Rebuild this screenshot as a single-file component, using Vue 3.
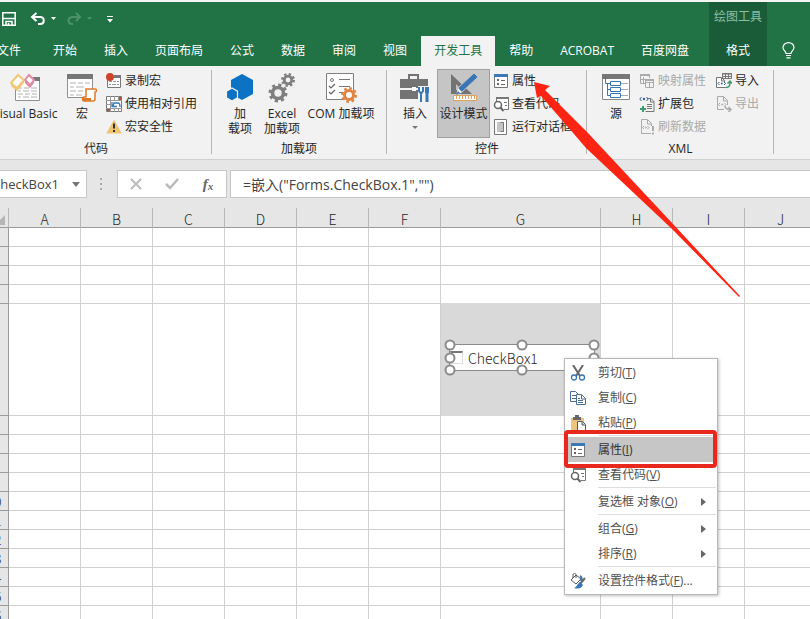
<script setup>
import { ref } from 'vue'

const tabs = ['文件', '开始', '插入', '页面布局', '公式', '数据', '审阅', '视图', '开发工具', '帮助', 'ACROBAT', '百度网盘']
const activeTab = ref('开发工具')
const nameBox = ref('CheckBox1')
const formula = ref('=嵌入("Forms.CheckBox.1","")')
const columns = ['A', 'B', 'C', 'D', 'E', 'F', 'G', 'H', 'I', 'J']
const rows = Array.from({ length: 17 }, (_, i) => i + 1)
const handles = ['nw', 'n', 'ne', 'w', 'e', 'sw', 's', 'se']
const menu = [
  { label: '剪切', key: 'T', icon: 'cut' },
  { label: '复制', key: 'C', icon: 'copy' },
  { label: '粘贴', key: 'P', icon: 'paste', sep: true },
  { label: '属性', key: 'I', icon: 'props', active: true },
  { label: '查看代码', key: 'V', icon: 'code', sep: true },
  { label: '复选框 对象', key: 'O', sub: true, sep: true },
  { label: '组合', key: 'G', sub: true },
  { label: '排序', key: 'R', sub: true, sep: true },
  { label: '设置控件格式', key: 'F', tail: '...', icon: 'format' }
]
</script>

<template>
  <div class="app">
    <!-- Shared icon symbols -->
    <svg class="defs" aria-hidden="true">
      <symbol id="i-props" viewBox="0 0 16 16">
        <path d="M1.500 2v12.500h13V2" fill="#fff" stroke="#777" />
        <path d="M1 1h14v3H1z" fill="#3b78b5" />
        <path d="M4 6h2v2H4zM4 10h2v2H4z" fill="#666" />
        <path d="M8 7.500h4M8 11.500h4" stroke="#666" />
      </symbol>
      <symbol id="i-code" viewBox="0 0 16 16">
        <path d="M3.500 5V1.500h12v12H11" fill="#fff" stroke="#777" />
        <path d="M3 1h13v2H3z" fill="#777" />
        <path d="M11 6.500h3M12 9.500h2" stroke="#777" />
        <circle cx="5" cy="9" r="3.500" fill="#fff" stroke="#666" stroke-width="1.500" />
        <path d="M7.500 11.500l3 3.500" stroke="#666" stroke-width="2" />
      </symbol>
    </svg>

    <header class="top">
      <div class="main-head">
        <div class="quick">
          <button aria-label="保存">
            <svg width="14" height="14" viewBox="0 0 14 14" fill="none" stroke="#fff" stroke-width="1.500"><path d="M.8.8h12.400v12.400H.8zM1 6.500h12M4 13V9.500h6V13M6.500 13v-2" /></svg>
          </button>
          <button class="undo" aria-label="撤消">
            <svg width="27" height="14" viewBox="0 0 27 14"><path d="M2 5h8c5 0 5 7 0 7H8M6.500 1L2 5l4.500 4" fill="none" stroke="#fff" stroke-width="2" /><path d="M21 5h5l-2.500 3z" fill="#fff" /></svg>
          </button>
          <button class="redo" aria-label="恢复" disabled>
            <svg width="27" height="14" viewBox="0 0 27 14"><path d="M14 5H7c-6 0-6 7 0 7M10 1l4 4-4 4" fill="none" stroke="#4c9269" stroke-width="2" /><path d="M21 5h5l-2.500 3z" fill="#4c9269" /></svg>
          </button>
          <button class="more" aria-label="自定义快速访问工具栏">
            <svg width="6" height="7" viewBox="0 0 6 7"><path d="M0 .5h6" stroke="#fff" /><path d="M0 3h6L3 6.500z" fill="#fff" /></svg>
          </button>
        </div>
        <nav class="tabs">
          <button v-for="t in tabs" :key="t" :class="{ on: t === activeTab }" @click="activeTab = t">{{ t }}</button>
        </nav>
      </div>
      <div class="context">
        <span>绘图工具</span>
        <button>格式</button>
      </div>
      <button class="bulb" aria-label="告诉我">
        <svg width="13" height="17" viewBox="0 0 13 17" fill="none" stroke="#fff" stroke-width="1.200"><path d="M4 11.500C4 9 1 8.500 1 5.500a5.500 4.900 0 0 1 11 0c0 3-3 3.500-3 6zM4 13.500h5M4.500 15.800h4" /></svg>
      </button>
    </header>

    <section class="ribbon">
      <div class="group first">
        <div class="body">
          <button class="big w66">
            <svg width="32" height="30" viewBox="0 0 32 30">
              <path d="M6 5h25v23H6z" fill="#fff" /><path d="M6.500 10v17.500h24V6" fill="none" stroke="#909090" /><path d="M24 4h7v4h-7z" fill="#777" />
              <path d="M9 15h4m2 0h5m2 0h6M9 18h3m2 0h6m2 0h6M9 21h5m2 0h5m2 0h5M9 24h3m2 0h6m2 0h6" stroke="#b0b0b0" />
              <path d="M9 2l6 5-7 8-6-5z" fill="#fff" stroke="#efc777" stroke-width="2" /><path d="M2 10l6 5 7-8v3l-7 8-6-5z" fill="#efc777" />
              <path d="M20 2l5 5-4 5-5-5z" fill="#fff" stroke="#e389a3" stroke-width="2" /><path d="M16 7l5 5 4-5v3l-4 5-5-5z" fill="#e389a3" />
            </svg>
            <span>Visual Basic</span>
          </button>
          <button class="big w48">
            <svg width="32" height="30" viewBox="0 0 32 30">
              <path d="M1.500 3v21.500h25V3" fill="#fff" stroke="#909090" /><path d="M1 1h26v5H1z" fill="#777" />
              <path d="M4 10h6m2 0h5m2 0h5M4 14h4m2 0h8M4 18h6m2 0h5M4 22h4m2 0h6" stroke="#b0b0b0" />
              <path d="M20 16h9c2 0 2 3 0 3v7c0 2-1 2-2 2H18c-2 0-2-4 0-4h2z" fill="#fff" stroke="#df7a2c" stroke-width="1.500" /><path d="M17 25h8v3h-8z" fill="#df7a2c" />
            </svg>
            <span>宏</span>
          </button>
          <div class="stack">
            <button><svg width="16" height="16" viewBox="0 0 16 16"><path d="M1.500 3v11.500h13V3" fill="#fff" stroke="#777" /><path d="M8 2h7v3H8z" fill="#777" /><path d="M3 8.500h3m1 0h3m1 0h2M3 11.500h2m1 0h4m1 0h2" stroke="#999" /><circle cx="4" cy="4" r="4" fill="#cf4427" /></svg>录制宏</button>
            <button><svg width="16" height="16" viewBox="0 0 16 16"><path d="M.5.5h15v15H.5z" fill="#fff" stroke="#777" /><path d="M4.500 0v16M8.500 0v5M12.500 0v5M0 4.500h16M0 8.500h5M0 12.500h16M8.500 12v4M12.500 12v4" stroke="#999" /><path d="M1 13h3v2H1zM13 1h2v3h-2z" fill="#b4513b" /><path d="M5 5h10v7H5z" fill="#fff" /><path d="M7 10l1-3h4c2 0 2 2 2 4M6 6v4.500h5" fill="none" stroke="#3876b4" stroke-width="1.300" /></svg>使用相对引用</button>
            <button><svg width="16" height="16" viewBox="0 0 16 16"><path d="M8 1.500L15 14H1z" fill="#efc46f" stroke="#efc46f" stroke-linejoin="round" /><path d="M8 4.500v5M8 11v2" stroke="#333" stroke-width="2" /></svg>宏安全性</button>
          </div>
        </div>
        <div class="caption">代码</div>
      </div>

      <div class="group addins">
        <div class="body">
          <button class="big w40">
            <svg width="28" height="30" viewBox="0 0 28 30"><path d="M16 1l11 6v14l-11 6-11-6V7z" fill="#0b72c4" /><path d="M6 15l5.500 3.200v6.600L6 28 .5 24.800v-6.600z" fill="#0b72c4" stroke="#f2f2f2" stroke-width="1.200" /></svg>
            <span>加<br>载项</span>
          </button>
          <button class="big w44">
            <svg width="28" height="30" viewBox="0 0 28 30" fill="none" stroke="#7f7f7f">
              <circle cx="10" cy="20" r="5.500" stroke-width="3.600" /><circle cx="10" cy="20" r="8" stroke-width="3" stroke-dasharray="3.140 3.140" />
              <circle cx="20" cy="7" r="3.800" stroke-width="2.800" /><circle cx="20" cy="7" r="5.800" stroke-width="2.400" stroke-dasharray="2.278 2.278" />
            </svg>
            <span>Excel<br>加载项</span>
          </button>
          <button class="big w74">
            <svg width="32" height="30" viewBox="0 0 32 30">
              <path d="M1.500.5h27v26h-27z" fill="#fff" stroke="#7f7f7f" /><path d="M14 6.500h11M14 13.500h11M14 19.500h5" stroke="#777" />
              <circle cx="7" cy="7" r="1.500" fill="none" stroke="#777" /><path d="M4 13l2 2 4-4M4 19l2 2 4-4" fill="none" stroke="#666" stroke-width="1.200" />
              <circle cx="24" cy="22" r="6" fill="#fff" /><circle cx="24" cy="22" r="4.500" fill="none" stroke="#e08440" stroke-width="3" /><circle cx="24" cy="22" r="6.800" fill="none" stroke="#e08440" stroke-width="2.400" stroke-dasharray="2.670 2.670" />
            </svg>
            <span>COM 加载项</span>
          </button>
        </div>
        <div class="caption">加载项</div>
      </div>

      <div class="group controls">
        <div class="body">
          <button class="big w44">
            <svg width="30" height="30" viewBox="0 0 30 30">
              <path d="M9 6V2h9v4" fill="none" stroke="#737373" stroke-width="2" /><path d="M0 6h28v9H0zM0 17h28v9H0z" fill="#737373" /><path d="M12 14h4v4h-4z" fill="#fff" />
              <path d="M18 13h12v17H18z" fill="#f2f2f2" /><path d="M19 14v4l1.500 2h1L23 18v-4M21 19v10" fill="none" stroke="#3876b4" stroke-width="2" /><path d="M25 14h4v6h-4z" fill="#3876b4" /><path d="M27 19v10" stroke="#3876b4" stroke-width="3" />
            </svg>
            <span>插入</span><i class="caret"></i>
          </button>
          <button class="big w53 pressed">
            <svg width="32" height="30" viewBox="0 0 32 30">
              <path d="M3 1l21 20H3zM8 11v6h6z" fill="#737373" fill-rule="evenodd" />
              <path d="M26 0l4 4-16 15-5 2 1-6z" fill="#3876b4" stroke="#c5c5c5" /><path d="M9 21l1-6 4 4z" fill="#fff" /><path d="M8 22l2-4 2 2z" fill="#3876b4" />
              <path d="M5.500 22.500h23v5h-23z" fill="#fff" stroke="#dda15e" /><path d="M8.500 23v3m3-3v3m3-3v3m3-3v3m3-3v3m3-3v3m3-3v3" stroke="#dda15e" />
            </svg>
            <span>设计模式</span>
          </button>
          <div class="stack gap3">
            <button><svg width="16" height="16"><use href="#i-props" /></svg>属性</button>
            <button><svg width="16" height="16"><use href="#i-code" /></svg>查看代码</button>
            <button><svg width="16" height="16" viewBox="0 0 16 16"><path d="M1.500.5h12v15h-12z" fill="#fff" stroke="#777" /><path d="M4 3h7v10H4z" fill="#c4c4c4" /><path d="M7.500 3.500h3v9h-3" fill="none" stroke="#777" /></svg>运行对话框</button>
          </div>
        </div>
        <div class="caption">控件</div>
      </div>

      <div class="group xml">
        <div class="body">
          <button class="big w40">
            <svg width="30" height="30" viewBox="0 0 30 30">
              <path d="M1.500 2v24.500h27V2" fill="#fff" stroke="#888" /><path d="M1 1h28v5H1z" fill="#777" /><path d="M19 10.500h8M19 16.500h8M19 22.500h8" stroke="#aaa" />
              <path d="M4.500 2v8.500h5M6.500 10v12.500h3M6 16.500h3" fill="none" stroke="#3876b4" /><path d="M9.500 8.500h10v4h-10zM9.500 14.500h10v4h-10zM9.500 20.500h10v4h-10z" fill="#fff" stroke="#3876b4" />
            </svg>
            <span>源</span>
          </button>
          <div class="stack gap3">
            <button disabled><svg width="16" height="16" viewBox="0 0 16 16" fill="none" stroke="#aaa"><path d="M6 10.500H1.500v-9h9V5M4.500 4v6M1 6.500h5M6.500 6.500h8v8h-8zM6 9.500h9M10.500 9v6" /><path d="M1 2h10M6 7h9" stroke-width="2" /></svg>映射属性</button>
            <button><svg width="16" height="16" viewBox="0 0 16 16" fill="none"><path d="M8 2.500h4l3 3v10H6.500M11.500 2v4H15M8 8.500h5M8 10.500h5M8 12.500h5" stroke="#777" /><path d="M2.500 1L.8 3l1.700 2M7.500 1l1.700 2-1.700 2" stroke="#315f91" /><circle cx="5" cy="3" r="1.200" fill="#315f91" /><path d="M4 10v6M1 13h6" stroke="#3f9a70" stroke-width="2" /></svg>扩展包</button>
            <button disabled><svg width="16" height="16" viewBox="0 0 16 16" fill="none" stroke="#aaa"><path d="M12 14.500H2.500v-14h6l4 4V7M8.500 1v4h4M5 7L3.500 8.500 5 10M8.500 7l1.500 1.500L8.500 10" /><circle cx="6.800" cy="8.500" r=".6" /><path d="M14 7v5M14 13.500v2" stroke-width="2" /></svg>刷新数据</button>
          </div>
          <div class="stack gap10">
            <button><svg width="16" height="16" viewBox="0 0 16 16" fill="none"><path d="M6.500.5h9v5h-9z" stroke="#777" /><path d="M6 1h10M6 3.500h10M9.500 1v5M12.500 1v5" stroke="#777" /><path d="M10 14.500H.5v-10h5l3 3V9M5.500 5v3h3" fill="#fff" stroke="#777" /><path d="M3.500 9L2 10.500 3.500 12M8 9l1.500 1.500L8 12" stroke="#315f91" /><circle cx="5.800" cy="10.500" r="1" fill="#315f91" /><path d="M10 14.500c3 0 4-1 4-6M11.500 10.500L14 8l2 2.500" stroke="#3f9a70" stroke-width="1.500" /></svg>导入</button>
            <button disabled><svg width="16" height="16" viewBox="0 0 16 16" fill="none" stroke="#aaa"><path d="M8 13.500H1.500v-13h6l4 4V9M7.500 1v4h4M4 7L2.500 8.500 4 10M8.500 7L10 8.500 8.500 10" /><circle cx="6.200" cy="8.500" r=".6" /><path d="M9 10c0 3 2 3.500 6 3.500M12.500 11l2.500 2.500-2.500 2.500" stroke-width="1.500" /></svg>导出</button>
          </div>
        </div>
        <div class="caption">XML</div>
      </div>
    </section>

    <section class="formula-bar">
      <div class="name-box">
        <input v-model="nameBox" aria-label="名称框">
        <button aria-label="展开名称框"><svg width="8" height="5" viewBox="0 0 8 5"><path d="M0 0h8L4 5z" fill="#777" /></svg></button>
      </div>
      <svg class="dots" width="2" height="13" viewBox="0 0 2 13"><path d="M0 1h2M0 6h2M0 11h2" stroke="#aaa" stroke-width="2" /></svg>
      <div class="fx">
        <button aria-label="取消"><svg width="12" height="12" viewBox="0 0 12 12"><path d="M1 1l10 10M11 1L1 11" stroke="#bbb" stroke-width="2" /></svg></button>
        <button aria-label="输入"><svg width="14" height="12" viewBox="0 0 14 12"><path d="M1 6l4 4 8-9" fill="none" stroke="#bbb" stroke-width="2.500" /></svg></button>
        <button class="fn" aria-label="插入函数"><i>f</i><i class="x">x</i></button>
      </div>
      <input v-model="formula" class="formula" aria-label="编辑栏">
    </section>

    <main class="sheet">
      <table>
        <colgroup>
          <col class="c-head">
          <col v-for="c in columns" :key="c" :class="c === 'G' ? 'c-wide' : 'c-std'">
        </colgroup>
        <thead>
          <tr>
            <th class="corner"><svg width="6" height="10" viewBox="0 0 6 10"><path d="M5 0v10H0V5z" fill="#b5b5b5" /></svg></th>
            <th v-for="c in columns" :key="c" scope="col">{{ c }}</th>
          </tr>
        </thead>
        <tbody>
          <tr v-for="r in rows" :key="r" :class="{ tall: r === 5 }">
            <th scope="row"><div class="num"><span>{{ r }}</span></div></th>
            <td v-for="c in columns" :key="c" :class="{ shaded: c === 'G' && r === 5, above: c === 'G' && r === 4 }"></td>
          </tr>
        </tbody>
      </table>

      <div class="object">
        <label><input type="checkbox">CheckBox1</label>
        <i v-for="h in handles" :key="h" class="handle" :class="h"></i>
      </div>

      <div class="menu" role="menu">
        <template v-for="m in menu" :key="m.key">
          <button class="item" :class="{ active: m.active }" role="menuitem">
            <span class="ico">
              <svg v-if="m.icon === 'cut'" width="16" height="16" viewBox="0 0 16 16" fill="none"><path d="M3 0l7 11M13 0L6 11" stroke="#666" stroke-width="2" /><circle cx="4" cy="12.500" r="2.500" stroke="#3876b4" stroke-width="1.300" /><circle cx="12" cy="12.500" r="2.500" stroke="#3876b4" stroke-width="1.300" /></svg>
              <svg v-else-if="m.icon === 'copy'" width="16" height="16" viewBox="0 0 16 16" fill="#fff" stroke="#4b6d93"><path d="M.5 1.500h5l3 3v7h-8zM2 5.500h4M2 8.500h4" /><path d="M6.500 4.500h5l4 4v6h-9zM11.500 5v4h4M8 8.500h2M8 10.500h5M8 12.500h5" /></svg>
              <svg v-else-if="m.icon === 'paste'" width="16" height="16" viewBox="0 0 16 16"><path d="M1 3h13v12H1z" fill="#edc17e" /><path d="M3 2h2V0h4v2h2v3H3z" fill="#666" /><path d="M7.500 6.500h5l3 3v6h-8zM12 7v3h3" fill="#fff" stroke="#4b5f78" /></svg>
              <svg v-else-if="m.icon === 'props'" width="16" height="16"><use href="#i-props" /></svg>
              <svg v-else-if="m.icon === 'code'" width="16" height="16"><use href="#i-code" /></svg>
              <svg v-else-if="m.icon === 'format'" width="16" height="16" viewBox="0 0 16 16"><path d="M6 2l5 4-5 5-5-4zM3 5V2c0-2 3-2 3 0v3" fill="#fff" stroke="#555" /><path d="M10 3c2 1 2 3 1 5" fill="none" stroke="#3876b4" stroke-width="2" /><path d="M15 5l-5 6" stroke="#666" stroke-width="2" /><path d="M10 9l3 3c-2 4-5 4-9 3 3-1 3-4 6-6z" fill="#3876b4" /></svg>
            </span>
            <span class="text">{{ m.label }}(<u>{{ m.key }}</u>){{ m.tail }}</span>
            <svg v-if="m.sub" class="arrow" width="5" height="8" viewBox="0 0 5 8"><path d="M0 0l5 4-5 4z" fill="#666" /></svg>
          </button>
          <div v-if="m.sep" class="sep"></div>
        </template>
      </div>
    </main>

    <svg class="pointer" width="208" height="219" viewBox="0 0 208 219" aria-hidden="true">
      <path d="M1 3L17 7 12 11 54 53 140 145 207 217 206 218 138 149 53 69Q30 42 8 17L4 19z" fill="#fd2414" />
    </svg>
  </div>
</template>

<style>
body { margin: 0; overflow: hidden; }
</style>

<style scoped>
.app {
  position: relative;
  display: flex;
  flex-direction: column;
  height: 100vh;
  overflow: hidden;
  box-sizing: border-box;
  padding-top: 2px;
  background: #f5f5f3;
  color: #262626;
  font: 12px/15px "Open Sans", "Noto Sans CJK SC", sans-serif;
}
.app *, .app *::before { box-sizing: border-box; }
.defs { position: absolute; width: 0; height: 0; }
button { font: inherit; color: inherit; background: none; border: 0; padding: 0; margin: 0; white-space: nowrap; }
input { font: inherit; color: inherit; margin: 0; border: 0; min-width: 0; }
svg { display: block; flex: none; }

.top { display: flex; height: 64px; flex: none; background: #217346; color: #fff; }
.main-head { display: flex; flex-direction: column; padding-right: 7px; }
.quick { display: flex; align-items: center; height: 34px; padding-left: 2px; }
.undo { margin-left: 14px; }
.redo { margin-left: 9px; }
.more { margin-left: 14px; }
.tabs { display: flex; flex: 1; gap: 1px; margin-left: -16px; }
.tabs button { padding: 0 13px 2px; }
.tabs button:first-child { margin-right: 5px; }
.tabs .on { background: #f2f2f2; color: #217346; }
.context { display: flex; flex-direction: column; align-items: center; width: 60px; background: #1a5c38; }
.context span { height: 34px; line-height: 29px; color: #8fbfa2; }
.context button { flex: 1; padding-bottom: 2px; }
.bulb { align-self: flex-end; padding: 0 15px 7px; }

.ribbon { display: flex; flex: none; height: 94px; background: #f2f2f2; border-bottom: 1px solid #d0d0d0; }
.group { position: relative; display: flex; flex-direction: column; flex: none; padding-top: 3px; }
.group::after { content: ""; position: absolute; right: 0; top: 4px; bottom: 5px; width: 1px; background: #b5b5b5; }
.first { margin-left: -20px; padding-left: 12px; padding-right: 15px; }
.first .caption { margin: 0 -15px 0 -12px; }
.addins { padding-left: 8px; padding-right: 9px; }
.controls { padding-left: 6px; padding-right: 15px; }
.controls .caption { margin: 0 -15px 0 -6px; }
.xml { padding-left: 9px; padding-right: 15px; }
.xml .caption { margin: 0 -15px 0 -9px; }
.body { display: flex; flex: none; height: 69px; }
.caption { line-height: 22px; text-align: center; }
.big { display: flex; flex-direction: column; align-items: center; padding-top: 4px; text-align: center; }
.big span { margin-top: 3px; }
.w40 { width: 40px; }
.w44 { width: 44px; }
.w48 { width: 48px; }
.w53 { width: 53px; }
.w66 { width: 66px; }
.w74 { width: 74px; }
.pressed { background: #c5c5c5; border: 1px solid #a0a0a0; padding-top: 3px; }
.caret { margin-top: 5px; border: 3px solid transparent; border-top-color: #777; border-bottom: 0; }
.stack { display: flex; flex-direction: column; }
.stack button { display: flex; align-items: center; gap: 3px; height: 23px; }
.stack button:disabled { color: #aaa; }
.gap3 { margin-left: 3px; }
.gap10 { margin-left: 10px; }

.formula-bar { display: flex; align-items: center; flex: none; height: 48px; background: #e6e6e6; font-size: 13px; color: #444; }
.name-box { display: flex; width: 100px; height: 28px; margin-left: -13px; background: #fff; border: 1px solid #c6c6c6; }
.name-box input { flex: 1; padding: 0 0 0 4px; background: none; }
.name-box button { padding: 0 6px; }
.dots { margin: 0 15px 0 13px; }
.fx { display: flex; width: 110px; height: 28px; background: #fff; border: 1px solid #c6c6c6; }
.fx button { flex: 1; display: flex; align-items: center; justify-content: center; }
.fx .fn { font: bold 15px/18px "Liberation Serif", serif; color: #666; }
.fn .x { font-size: 11px; padding-top: 4px; }
.formula { flex: 1; height: 28px; margin-left: 3px; padding: 0 12px; background: #fff; border: 1px solid #c6c6c6; border-right: 0; font-size: 14px; }

.sheet { position: relative; flex: 1; min-height: 0; overflow: hidden; background: #fff; }
table { table-layout: fixed; width: 817px; border-collapse: separate; border-spacing: 0; }
.c-head { width: 9px; }
.c-std { width: 72px; }
.c-wide { width: 160px; }
th, td { padding: 0; height: 19px; border: solid #d0d0d0; border-width: 0 1px 1px 0; overflow: hidden; }
th { font: 300 14px/18px "Noto Sans CJK SC", sans-serif; background: #e6e6e6; border-color: #9b9b9b; }
thead th { height: 20px; padding-top: 4px; border-right-color: #b8b8b8; line-height: 15px; }
.tall th, .tall td { height: 112px; }
.shaded { background: #d9d9d9; border-bottom-color: #d9d9d9; }
.above { border-bottom-color: #d9d9d9; }
.num { display: flex; justify-content: flex-end; padding-right: 6px; height: 18px; }
.num span { flex: none; width: 16px; text-align: center; }

.object { position: absolute; left: 449px; top: 136px; width: 146px; height: 27px; background: #fff; border: 1px solid #8c8c8c; }
.object label { display: flex; align-items: center; height: 25px; font: 300 14px/20px "Noto Sans CJK SC", sans-serif; }
.object input { appearance: none; width: 13px; height: 13px; margin-right: 5px; border: 1px solid #ddd; border-top: 2px solid #777; }
.handle { position: absolute; width: 11px; height: 11px; border: 2px solid #8c8c8c; border-radius: 50%; background: #fff; transform: translate(-50%, -50%); }
.nw, .w, .sw { left: 0; }
.n, .s { left: 50%; }
.ne, .e, .se { left: 100%; }
.nw, .n, .ne { top: 0; }
.w, .e { top: 50%; }
.sw, .s, .se { top: 100%; }

.menu { position: absolute; left: 564px; top: 150px; width: 154px; padding: 1px; background: #fff; border: 1px solid #b8b8b8; box-shadow: 1px 1px 3px rgba(0, 0, 0, 0.25); color: #505050; }
.item { position: relative; display: flex; align-items: center; width: 100%; height: 25px; padding: 0 10px 0 4px; text-align: left; }
.ico { width: 16px; margin-right: 12px; }
.text { flex: 1; }
.active { background: #c6c6c6; color: #333; }
.active::before { content: ""; position: absolute; inset: -7px -1px -6px -2px; border: 4px solid #e8281c; border-radius: 4px; z-index: 1; }
.sep { height: 2px; margin-left: 32px; border-top: 1px solid #ddd; }

.pointer { position: absolute; left: 533px; top: 79px; }
</style>
